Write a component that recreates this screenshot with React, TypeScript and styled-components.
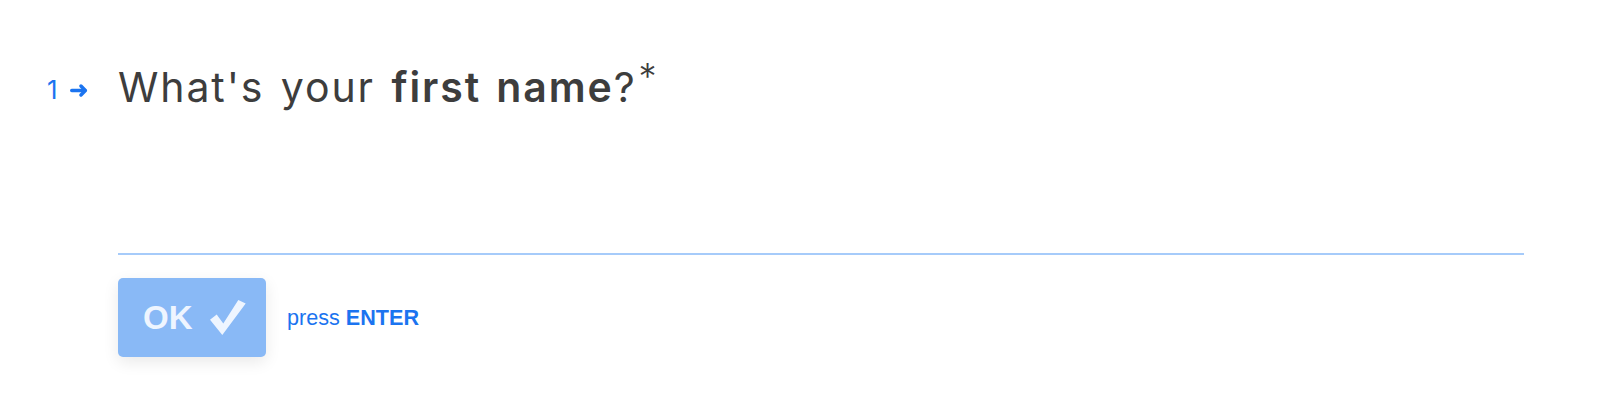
import React from "react";
import styled, { createGlobalStyle } from "styled-components";

const Global = createGlobalStyle`
  html, body { margin: 0; padding: 0; background: #ffffff; }
  body { font-family: "Inter", "Liberation Sans", sans-serif; }
`;

const Page = styled.div`
  width: 1608px;
  height: 412px;
  box-sizing: border-box;
  padding-top: 51px;
  display: flex;
  align-items: flex-start;
`;

const Counter = styled.div`
  width: 118px;
  box-sizing: border-box;
  padding: 26px 30px 0 47px;
  display: flex;
  align-items: center;
  gap: 12px;
  color: #1b74f0;
  font-family: "Inter", sans-serif;
  font-size: 26px;
  line-height: 1;
`;

const Content = styled.div`
  width: 1406px;
  display: flex;
  flex-direction: column;
`;

const Question = styled.h1`
  margin: 0;
  font-family: "Inter", sans-serif;
  font-weight: 400;
  font-size: 41px;
  line-height: 50px;
  color: #3d3d3d;
  letter-spacing: 1.9px;
  word-spacing: 3px;
  b { font-weight: 600; }
`;

const Star = styled.span`
  font-size: 36px;
  vertical-align: 13px;
  margin-left: 2px;
  font-weight: 300;
`;

const Input = styled.div`
  height: 141px;
  border-bottom: 2px solid #a6cbfa;
`;

const Actions = styled.div`
  margin-top: 23px;
  display: flex;
  align-items: center;
  gap: 21px;
`;

const OkButton = styled.div`
  width: 148px;
  height: 79px;
  box-sizing: border-box;
  padding-left: 25px;
  border-radius: 5px;
  background: #89b9f6;
  box-shadow: 0 5px 16px rgba(0, 0, 0, 0.09);
  display: flex;
  align-items: center;
  justify-content: flex-start;
  gap: 17px;
  color: #eef5ff;
  font-family: "Liberation Sans", Arial, sans-serif;
  font-weight: 700;
  font-size: 33px;
`;

const Hint = styled.div`
  color: #1b74f0;
  font-family: "Liberation Sans", Arial, sans-serif;
  font-size: 21.6px;
  b { font-weight: 700; }
`;

const Arrow = () => (
  <svg width="21" height="15" viewBox="0 0 21 15">
    <path d="M2 7.5H17" stroke="#1b74f0" strokeWidth="4" strokeLinecap="round" />
    <path d="M12.5 2.5L17.5 7.5L12.5 12.5" fill="none" stroke="#1b74f0" strokeWidth="4" strokeLinecap="round" strokeLinejoin="round" />
  </svg>
);

const Check = () => (
  <svg width="36" height="35" viewBox="0 0 36 35">
    <path d="M0 19.7L6.7 14.4L13.3 23.4L28.3 0L35.7 3.4L12.3 35Z" fill="#eef5ff" />
  </svg>
);

export default function App() {
  return (
    <>
      <Global />
      <Page>
        <Counter>
          <span>1</span>
          <Arrow />
        </Counter>
        <Content>
          <Question>
            What's your <b>first name</b>?<Star>*</Star>
          </Question>
          <Input />
          <Actions>
            <OkButton>
              <span>OK</span>
              <Check />
            </OkButton>
            <Hint>
              press <b>ENTER</b>
            </Hint>
          </Actions>
        </Content>
      </Page>
    </>
  );
}
